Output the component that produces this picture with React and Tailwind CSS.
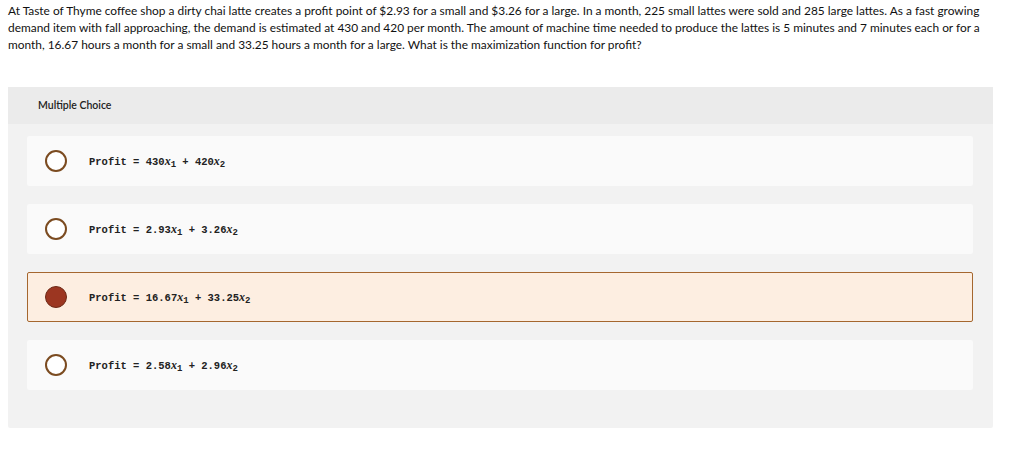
import React from "react";

const options = [
    {a: "430", b: "420", selected: false},
    {a: "2.93", b: "3.26", selected: false},
    {a: "16.67", b: "33.25", selected: true},
    {a: "2.58", b: "2.96", selected: false},
];

const lines = [
    "At Taste of Thyme coffee shop a dirty chai latte creates a profit point of $2.93 for a small and $3.26 for a large. In a month, 225 small lattes were sold and 285 large lattes. As a fast growing",
    "demand item with fall approaching, the demand is estimated at 430 and 420 per month. The amount of machine time needed to produce the lattes is 5 minutes and 7 minutes each or for a",
    "month, 16.67 hours a month for a small and 33.25 hours a month for a large. What is the maximization function for profit?",
];

const Option = ({a, b, selected}) => (
    <div
        className={
            selected
                ? "h-[50px] flex items-center rounded-[2px] border border-[#a5672f] bg-[#fdeee1] pl-[17px]"
                : "h-[50px] flex items-center rounded-[2px] border border-transparent bg-[#fafafa] pl-[17px]"
        }
    >
        {selected ? (
            <span className="w-[22px] h-[22px] rounded-full bg-[#9c3621] border border-[#6e2a17]"/>
        ) : (
            <span className="w-[22px] h-[22px] rounded-full border-2 border-[#7b4b20] bg-white"/>
        )}
        <span className="ml-[22px] text-[10.5px] font-bold text-[#222] font-['Liberation_Mono',monospace] whitespace-pre">
            Profit = {a}
            <i className="font-['Liberation_Serif',serif] italic text-[12px]">x</i>
            <sub className="text-[9px]">1</sub>
            {" + "}{b}
            <i className="font-['Liberation_Serif',serif] italic text-[12px]">x</i>
            <sub className="text-[9px]">2</sub>
        </span>
    </div>
);

export default function App() {
    return (
        <div className="w-[1024px] h-[452px] bg-white font-['Lato',sans-serif] text-[#111]">
            <div className="px-2 pt-[2px] text-[11.9px] leading-[17px]">
                {lines.map((l, i) => (
                    <div key={i} className="whitespace-nowrap">{l}</div>
                ))}
            </div>
            <div className="ml-2 mt-[34px] w-[985px] h-[341px] bg-[#f2f2f2] rounded-[2px]">
                <div className="h-[37px] bg-[#ebebeb] flex items-center pl-[30px] text-[10.5px] font-semibold text-[#222]">
                    Multiple Choice
                </div>
                <div className="pt-[12px] pl-[19px] pr-[20px] flex flex-col gap-[18px]">
                    {options.map((o, i) => (
                        <Option key={i} {...o}/>
                    ))}
                </div>
            </div>
        </div>
    );
}
